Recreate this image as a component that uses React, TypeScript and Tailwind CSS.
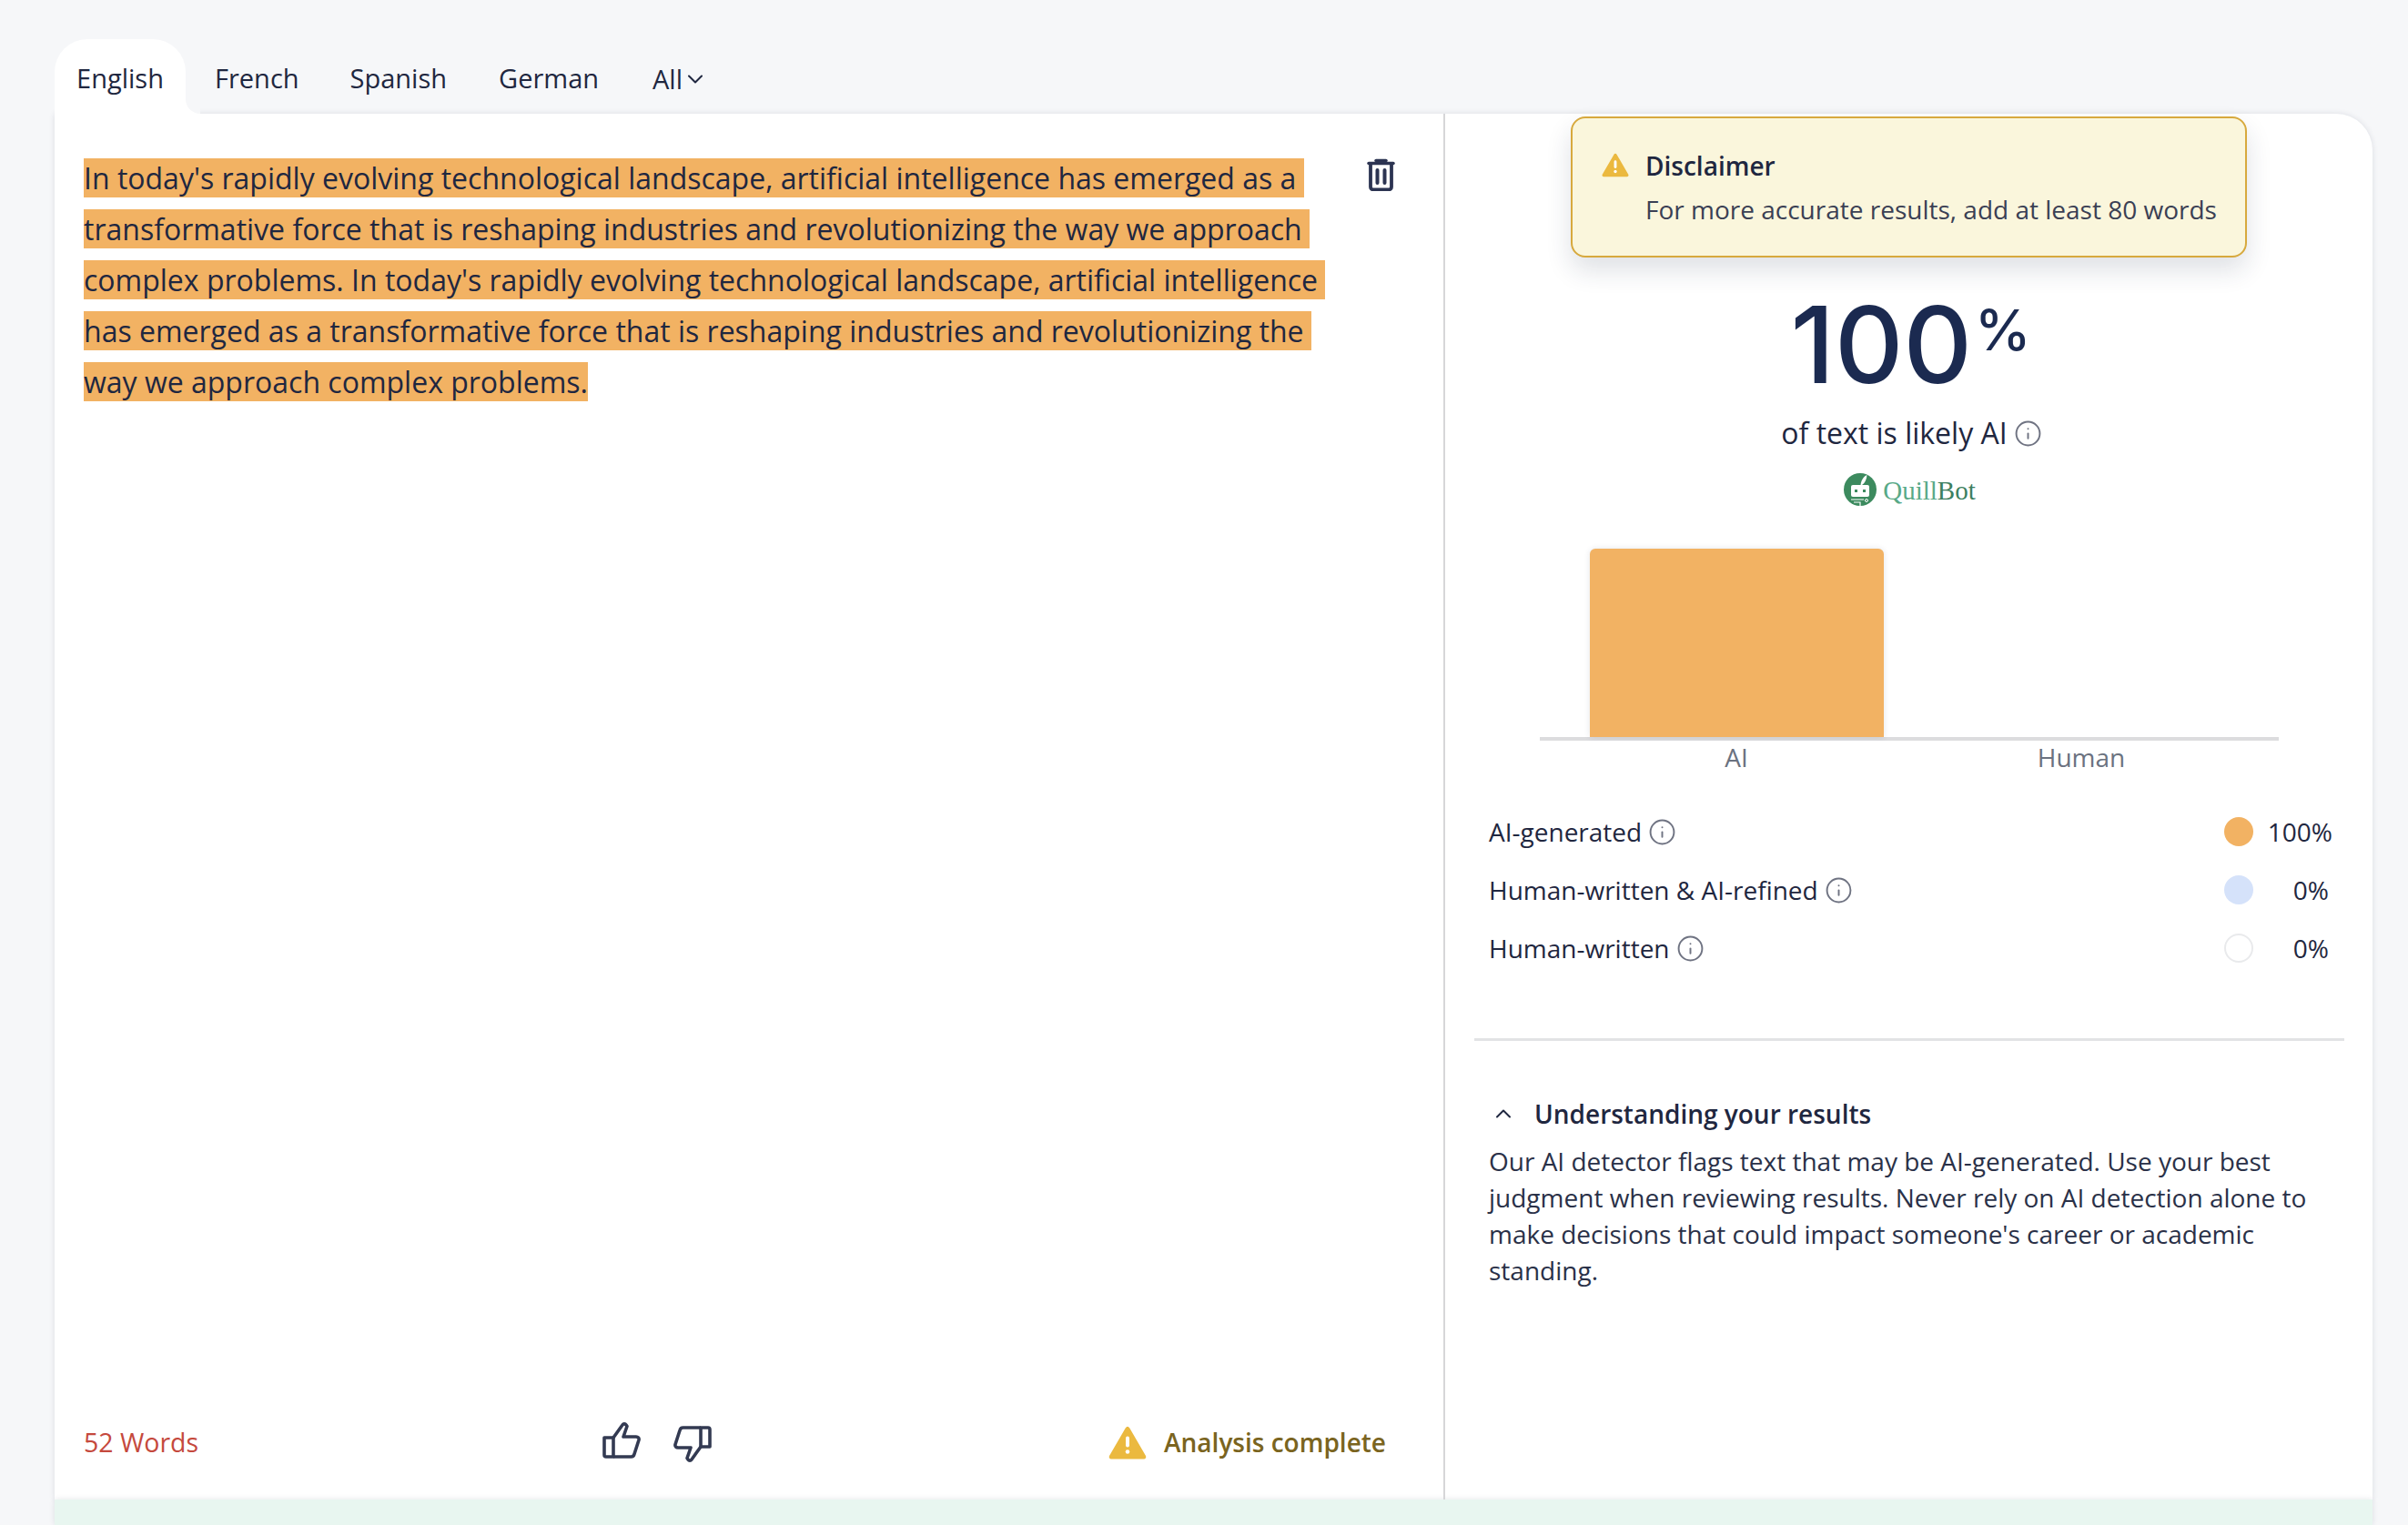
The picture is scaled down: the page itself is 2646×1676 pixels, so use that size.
import { ChevronDown, ChevronUp, Info } from 'lucide-react'

const passage =
  "In today's rapidly evolving technological landscape, artificial intelligence has emerged as a transformative force that is reshaping industries and revolutionizing the way we approach complex problems. In today's rapidly evolving technological landscape, artificial intelligence has emerged as a transformative force that is reshaping industries and revolutionizing the way we approach complex problems."

const legend = [
  { label: 'AI-generated', value: '100%', dot: 'bg-[#f2b263]', pad: 'pr-[0px]' },
  { label: 'Human-written & AI-refined', value: '0%', dot: 'bg-[#d5e2fa]', pad: 'pr-[4px]' },
  { label: 'Human-written', value: '0%', dot: 'bg-white border-2 border-[#e9eaec]', pad: 'pr-[4px]' },
]

function TrashIcon() {
  return (
    <svg width="31" height="36" viewBox="0 0 31 36" fill="none">
      <path d="M10 2.500h11" stroke="#2c3452" strokeWidth="3.500" strokeLinecap="round" />
      <path d="M2 5.500h27" stroke="#2c3452" strokeWidth="3.500" strokeLinecap="round" />
      <path d="M4 6v25.500a3 3 0 0 0 3 3h17a3 3 0 0 0 3-3V6" stroke="#2c3452" strokeWidth="3.800" />
      <path d="M11.500 13v14M19.500 13v14" stroke="#2c3452" strokeWidth="4" strokeLinecap="round" />
    </svg>
  )
}

function ThumbIcon({ className }: { className?: string }) {
  return (
    <svg width="43" height="40" viewBox="0 0 43 40" fill="none" stroke="#333a52" strokeWidth="3.600" strokeLinejoin="round" className={className}>
      <path d="M3 17h10v21H5a2 2 0 0 1-2-2V17Z" />
      <path d="M13 17 23 3c1-1.500 3-1.500 4 0l1 1.500L24 16h14c2 0 3.500 1.500 3 3.500L36 35c-.5 2-1.500 3-3.500 3H13" />
    </svg>
  )
}

function WarnIcon({ size }: { size: number }) {
  return (
    <svg width={size} height={size} viewBox="0 0 42 37">
      <path d="M21 1.500c1 0 1.800.6 2.300 1.500L41 33.500c.9 1.600-.2 3.500-2 3.500H3c-1.800 0-2.900-1.900-2-3.500L18.700 3c.5-.9 1.300-1.500 2.300-1.500Z" fill="#ebb93f" />
      <rect x="19" y="12" width="4" height="12" rx="2" fill="#fff" />
      <circle cx="21" cy="29" r="2.300" fill="#fff" />
    </svg>
  )
}

function QuillLogo() {
  return (
    <svg width="37" height="38" viewBox="0 0 37 38">
      <circle cx="18" cy="18" r="18" fill="#3c8a5e" />
      <path d="M18.500 13c.5-5 3-9 7-11-.3 5-2.500 9-5.500 11Z" fill="#fff" />
      <rect x="8" y="13" width="20" height="13" rx="2" fill="#fff" />
      <rect x="12" y="18" width="3" height="3" fill="#3c8a5e" />
      <rect x="21" y="18" width="3" height="3" fill="#3c8a5e" />
      <path d="M8 29h14M11 32h7v4" stroke="#fff" strokeWidth="1.200" fill="none" />
      <circle cx="25" cy="30" r="1.500" stroke="#fff" strokeWidth="1" fill="none" />
    </svg>
  )
}

export default function App() {
  return (
    <div className="h-[1676px] w-full overflow-hidden bg-[#f6f7f9] font-['Open_Sans',sans-serif] text-[#1f2740]">
      <div className="flex h-[125px] items-end pl-[60px] text-[29px] font-medium">
        <div className="relative flex h-[82px] w-[144px] items-center justify-center rounded-t-[36px] bg-white pt-[3px]">
          English
          <div className="absolute bottom-0 left-full h-[16px] w-[16px] bg-white">
            <div className="h-full w-full rounded-bl-[16px] bg-[#f6f7f9]" />
          </div>
        </div>
        <div className="ml-[32px] flex h-[82px] items-center pt-[3px]">French</div>
        <div className="ml-[56px] flex h-[82px] items-center pt-[3px]">Spanish</div>
        <div className="ml-[57px] flex h-[82px] items-center pt-[3px]">German</div>
        <div className="ml-[59px] flex h-[82px] items-center pt-[6px] font-normal">
          All
          <ChevronDown size={28} strokeWidth={1.7} />
        </div>
      </div>

      <div className="ml-[60px] flex h-[1523px] w-[2547px] rounded-tr-[40px] bg-white shadow-[0_0_6px_rgba(30,40,70,0.12)]">
        <div className="flex w-[1528px] flex-col border-r-2 border-[#d6d6d8] pl-[32px] pr-[64px]">
          <div className="flex flex-1 justify-between pt-[43px]">
            <p className="w-[1385px] whitespace-break-spaces text-[32px] leading-[56px]">
              <span className="bg-[#f2b263]">{passage}</span>
            </p>
            <div className="mt-[6px] mr-[-11px]">
              <TrashIcon />
            </div>
          </div>
          <div className="flex h-[120px] items-center justify-between pb-[6px]">
            <span className="text-[28.5px] font-medium text-[#c5493d]">52 Words</span>
            <div className="ml-[7px] flex items-start gap-[36px]">
              <ThumbIcon />
              <ThumbIcon className="mt-[4px] rotate-180" />
            </div>
            <div className="mr-[-1px] flex items-center gap-[19px] text-[28px] font-semibold text-[#7a6420]">
              <WarnIcon size={42} />
              Analysis complete
            </div>
          </div>
        </div>

        <div className="flex flex-1 flex-col items-center">
          <div className="relative mt-[3px] h-[155px] w-[743px] rounded-[16px] border-2 border-[#d7a93d] bg-[#faf6dc] pl-[80px] pt-[32px] shadow-[0_14px_28px_rgba(30,40,70,0.14)]">
            <div className="absolute left-[32px] top-[36px]">
              <WarnIcon size={30} />
            </div>
            <div className="text-[28px] font-semibold leading-[40px]">Disclaimer</div>
            <div className="mt-[8px] text-[28px] leading-[40px] text-[#3a4054]">For more accurate results, add at least 80 words</div>
          </div>

          <div className="mt-[26px] ml-[4px] flex items-start font-['Inter',sans-serif] text-[#1b2a50]">
            <span className="text-[117px] font-medium leading-[140px]">100</span>
            <span className="ml-[3px] mt-[16px] text-[62px] font-medium leading-[76px]">%</span>
          </div>

          <div className="mt-[5px] ml-[6px] flex items-center gap-[7px] text-[32px] leading-[44px]">
            of text is likely AI
            <Info size={31} strokeWidth={1.5} className="text-[#6f7382]" />
          </div>

          <div className="mt-[22px] ml-[2px] flex items-center gap-[6px]">
            <QuillLogo />
            <span className="font-['Liberation_Serif',serif] text-[29px] leading-[38px] text-[#58a987]">
              Quill<span className="text-[#3c7f60]">Bot</span>
            </span>
          </div>

          <div className="mt-[45px] w-[812px]">
            <div className="border-b-4 border-[#dcdcde] pl-[55px]">
              <div className="h-[207px] w-[323px] rounded-t-[6px] bg-[#f2b263] shadow-[0_0_6px_rgba(30,40,70,0.12)]" />
            </div>
            <div className="flex h-[40px] pl-[27px] text-[28px] leading-[36px] text-[#6b7280]">
              <span className="w-[379px] text-center">AI</span>
              <span className="w-[379px] text-center">Human</span>
            </div>
          </div>

          <div className="mt-[40px] flex w-full flex-col gap-[24px] pl-[48px] pr-[44px] text-[28px] leading-[40px]">
            {legend.map((row) => (
              <div key={row.label} className="flex items-center">
                <span>{row.label}</span>
                <Info size={31} strokeWidth={1.5} className="ml-[7px] text-[#6f7382]" />
                <span className={`ml-auto h-[32px] w-[32px] rounded-full ${row.dot}`} />
                <span className={`w-[87px] text-right ${row.pad}`}>{row.value}</span>
              </div>
            ))}
          </div>

          <div className="mt-[79px] h-[3px] w-[956px] bg-[#e2e3e5]" />

          <div className="mt-[60px] w-full pl-[48px] pr-[60px]">
            <div className="flex items-center gap-[20px] text-[28px] font-semibold leading-[40px]">
              <ChevronUp size={28} strokeWidth={1.7} className="ml-[2px]" />
              Understanding your results
            </div>
            <p className="mt-[12px] text-[28px] leading-[40px] text-[#2a3148]">
              Our AI detector flags text that may be AI-generated. Use your best judgment when reviewing results. Never rely on AI detection alone to make decisions that could impact someone's career or academic standing.
            </p>
          </div>
        </div>
      </div>

      <div className="ml-[60px] h-[28px] w-[2547px] bg-[#e8f6f0] shadow-[0_0_6px_rgba(30,40,70,0.12)]" />
    </div>
  )
}
